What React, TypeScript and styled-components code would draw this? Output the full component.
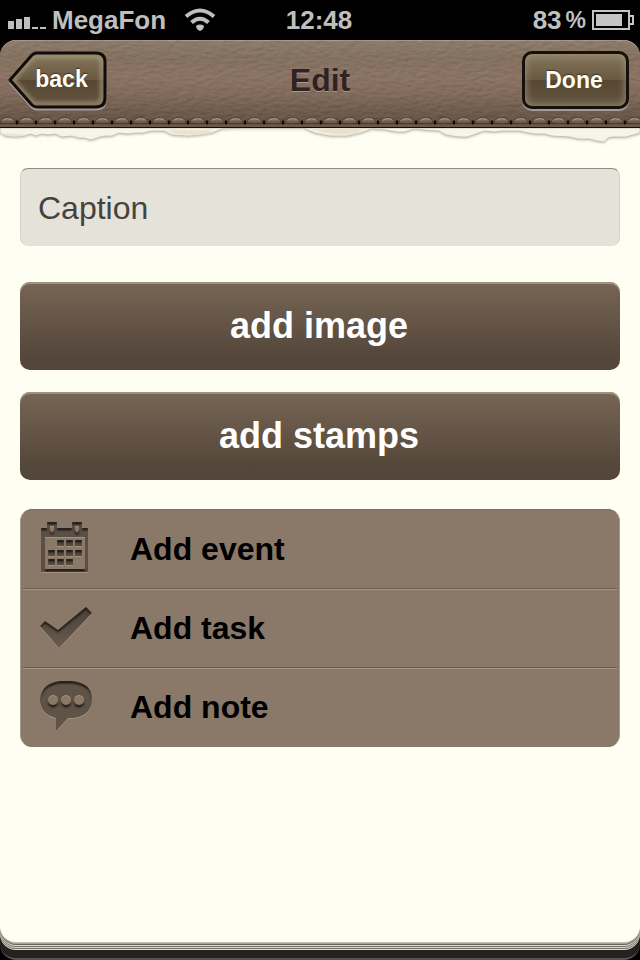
import React from "react";
import styled, { createGlobalStyle } from "styled-components";

const Global = createGlobalStyle`
  * { box-sizing: border-box; }
  html, body { margin: 0; background: #000; }
  body { font-family: "Liberation Sans", Arial, Helvetica, sans-serif; }
  button, input { font-family: inherit; }
`;

const Screen = styled.div`
  display: flex;
  flex-direction: column;
  min-height: 100vh;
  background: #000;
`;

const StatusBar = styled.header`
  display: grid;
  grid-template-columns: 1fr auto 1fr;
  align-items: center;
  height: 40px;
  padding: 0 6px 0 8px;
  color: #bfbfbf;
  font-size: 26px;
  font-weight: bold;
  line-height: 40px;
`;

const StatusGroup = styled.div<{ $end?: boolean }>`
  display: flex;
  align-items: center;
  justify-content: ${(p) => (p.$end ? "flex-end" : "flex-start")};
  gap: ${(p) => (p.$end ? 6 : 5)}px;
`;

const Carrier = styled.span`
  margin-right: 13px;
`;

const Clock = styled.span`
  padding-right: 4px;
`;

const Percent = styled.span`
  display: flex;
  gap: 4px;
`;

const PercentSign = styled.span`
  font-size: 23px;
`;

const NavBar = styled.nav`
  position: relative;
  z-index: 1;
  display: grid;
  grid-template-columns: 1fr auto 1fr;
  align-items: start;
  height: 88px;
  padding: 11px 11px 0 8px;
  border-radius: 16px 16px 0 0;
  background: linear-gradient(#8f7e6d 0, #85725f 18px, #8d7464 38px, #7f6959 56px, #695647 74px, #5c4b3e 88px);
  box-shadow: inset 0 1px #ada092;
`;

const LeatherGrain = styled.svg`
  position: absolute;
  inset: 0;
  width: 100%;
  height: 100%;
  border-radius: 16px 16px 0 0;
`;

const Seam = styled.svg`
  position: absolute;
  left: 0;
  bottom: 0;
  width: 100%;
  height: 14px;
`;

const Title = styled.h1`
  position: relative;
  margin: 0;
  padding-left: 3px;
  color: #32221f;
  font-size: 32px;
  line-height: 58px;
  text-shadow: 0 1px #a69a92;
`;

const BackButton = styled.button`
  position: relative;
  justify-self: start;
  width: 100px;
  height: 60px;
  padding: 0 0 4px 7px;
  border: 0;
  background: none;
  color: #fffef2;
  font-size: 23px;
  font-weight: bold;
  text-shadow: 0 -1px 1px #3c3226;
`;

const BackShape = styled.svg`
  position: absolute;
  left: 0;
  top: 0;
`;

const BackLabel = styled.span`
  position: relative;
`;

const DoneButton = styled.button`
  position: relative;
  justify-self: end;
  width: 107px;
  height: 58px;
  padding: 0 3px 0 0;
  border: 3px solid #17110d;
  border-radius: 10px;
  background: linear-gradient(#87775f 0, #67583f 50%, #574733 51%, #63543f 100%);
  box-shadow: inset 0 0 8px #a19679, 0 2px #a59a95;
  color: #fffef2;
  font-size: 23px;
  font-weight: bold;
  text-shadow: 0 -1px 1px #3c3226;
`;

const Base = styled.div`
  display: flex;
  flex: 1;
  flex-direction: column;
  padding-bottom: 16px;
  border-bottom: 2px solid #555352;
  border-radius: 0 0 16px 16px;
  background: #25211f;
`;

const Paper = styled.main`
  position: relative;
  flex: 1;
  padding: 40px 20px;
  border-radius: 0 0 16px 16px;
  background: #fffef2;
  box-shadow: 0 1px #c5c2b6, 0 2px #a5a297, 0 3px #66645c, 0 4px #dedbd0,
    0 5px #77746b, 0 6px #d5d2c7, 0 7px #77746b, 0 8px #dedbd0;
`;

const TornEdge = styled.svg`
  position: absolute;
  left: 0;
  top: 0;
  width: 100%;
  height: 18px;
`;

const Form = styled.form`
  display: flex;
  flex-direction: column;
`;

const CaptionInput = styled.input`
  width: 100%;
  height: 78px;
  margin-bottom: 36px;
  padding: 2px 17px 0;
  border: 1px solid #d5d2c7;
  border-top-color: #8f8c82;
  border-bottom-color: #e5e2d9;
  border-radius: 8px;
  background: #e5e2d9;
  color: #44443f;
  font-size: 32px;
  &::placeholder { color: #44443f; opacity: 1; }
`;

const WideButton = styled.button`
  height: 88px;
  margin-bottom: 22px;
  padding: 0 2px 0 0;
  border: 0;
  border-radius: 10px;
  background: linear-gradient(#776655, #54463a 85%);
  box-shadow: inset 0 2px #9e9282;
  color: #fff;
  font-size: 36px;
  font-weight: bold;
`;

const ActionList = styled.ul`
  margin: 7px 0 0;
  padding: 0 2px;
  list-style: none;
  border: 1px solid #a3998b;
  border-top-color: #786c5d;
  border-bottom-color: #84786b;
  border-radius: 12px;
  background: #8a7968;
`;

const ActionItem = styled.li`
  & + & { border-top: 1px solid #69594b; box-shadow: inset 0 1px #a79886; }
`;

const ActionButton = styled.button`
  display: grid;
  grid-template-columns: 54px 1fr;
  column-gap: 36px;
  align-items: center;
  width: 100%;
  height: 78px;
  padding: 0 17px;
  border: 0;
  background: none;
  color: #000;
  font-size: 32px;
  font-weight: bold;
  text-align: left;
`;

const SignalIcon = () => (
  <svg width="39" height="24" viewBox="0 0 39 24" fill="currentColor" aria-hidden="true">
    <path d="M0 13h6v8H0zM8 11h6v10H8zM16 9h6v12h-6zM24 19h6v2h-6zM32 19h6v2h-6z" />
  </svg>
);

const WifiIcon = () => (
  <svg width="32" height="24" viewBox="0 0 32 24" fill="none" stroke="currentColor" strokeWidth="4" aria-hidden="true">
    <path d="M2 8.5Q16-3.5 30 8.5M7.500 14.500Q16 7 24.500 14.500" />
    <path d="M12 19Q12 16.500 16 16.500T20 19Q19 22 16 23Q13 22 12 19z" fill="currentColor" stroke="none" />
  </svg>
);

const BatteryIcon = () => (
  <svg width="42" height="20" viewBox="0 0 42 20" aria-hidden="true">
    <path d="M1 1h36v18H1z" fill="none" stroke="#c4c4c4" strokeWidth="2" />
    <path d="M4 4h26v12H4z" fill="#c4c4c4" />
    <path d="M37 6h4v8h-4" fill="none" stroke="#c4c4c4" strokeWidth="2" />
  </svg>
);

const BackOutline = () => (
  <BackShape width="100" height="60" viewBox="0 0 100 60" aria-hidden="true">
    <defs>
      <linearGradient id="backFill" x2="0" y2="1">
        <stop stopColor="#87775f" />
        <stop offset=".5" stopColor="#67583f" />
        <stop offset=".51" stopColor="#574733" />
        <stop offset="1" stopColor="#63543f" />
      </linearGradient>
      <clipPath id="backClip"><path d="M2 29L24 4Q26 2 29 2h59q9 0 9 9v36q0 9-9 9H29q-3 0-5-2z" /></clipPath>
      <filter id="backGlow"><feGaussianBlur stdDeviation="2" /></filter>
    </defs>
    <path d="M2 31L24 56Q26 58 29 58h59q9 0 9-9v-9" fill="none" stroke="#a59a95" strokeWidth="3" />
    <g clipPath="url(#backClip)">
      <path d="M2 29L24 4Q26 2 29 2h59q9 0 9 9v36q0 9-9 9H29q-3 0-5-2z" fill="url(#backFill)" />
      <path d="M5 29L26 5h61q7 0 7 7v34q0 7-7 7H26z" fill="none" stroke="#aaa081" strokeWidth="3" filter="url(#backGlow)" />
    </g>
    <path d="M2 29L24 4Q26 2 29 2h59q9 0 9 9v36q0 9-9 9H29q-3 0-5-2z" fill="none" stroke="#120d0a" strokeWidth="3" strokeLinejoin="round" />
  </BackShape>
);

const Grain = () => (
  <LeatherGrain aria-hidden="true">
    <filter id="leather" x="0" y="0" width="100%" height="100%" colorInterpolationFilters="sRGB">
      <feTurbulence type="fractalNoise" baseFrequency=".12 .3" numOctaves="3" seed="4" result="n" />
      <feDiffuseLighting in="n" surfaceScale="1.2" lightingColor="#b8a292"><feDistantLight azimuth="65" elevation="45" /></feDiffuseLighting>
    </filter>
    <rect width="100%" height="100%" filter="url(#leather)" opacity=".16" />
  </LeatherGrain>
);

const Stitches = () => (
  <Seam aria-hidden="true">
    <defs>
      <linearGradient id="thread" x2="0" y2="1">
        <stop stopColor="#988673" /><stop offset=".5" stopColor="#78675a" /><stop offset="1" stopColor="#5a4a3e" />
      </linearGradient>
      <pattern id="stitch" width="19" height="14" patternUnits="userSpaceOnUse" x="-2">
        <path d="M0 9h19" stroke="#45372c" strokeWidth="3" />
        <path d="M1.500 9Q3 3.500 9.500 3.500T17.500 9Q10 11 1.500 9z" fill="url(#thread)" stroke="#44362b" strokeWidth=".8" />
        <path d="M5 6Q9 3.500 14 5.500" fill="none" stroke="#a39280" />
        <path d="M0 6.500v5M19 6.500v5" stroke="#100a07" strokeWidth="2" />
        <path d="M0 11.500h19" stroke="#6d5c4e" strokeWidth="2" />
        <path d="M0 13.500h19" stroke="#17100b" />
      </pattern>
    </defs>
    <rect width="100%" height="14" fill="url(#stitch)" />
  </Seam>
);

const TornPaper = () => (
  <TornEdge viewBox="0 0 640 18" preserveAspectRatio="none" aria-hidden="true">
    <defs>
      <filter id="tearShadow" x="-5%" y="-30%" width="110%" height="190%"><feDropShadow dx="0" dy="1" stdDeviation="1" floodColor="#6d685b" floodOpacity=".4" /></filter>
      <filter id="soften" x="-5%" y="-30%" width="110%" height="160%"><feGaussianBlur stdDeviation="1" /></filter>
    </defs>
    <path d="M0 0V5L6 8 16 9 24 8 31 6 36 8 42 6 48 7 55 6 62 9 72 8 79 10 84 10 91 12 100 9 106 8 112 8 119 5 128 6 135 5 143 5 151 3 164 3 172 7 188 8 200 7 212 5 222 1 245 0H303L315 5 330 8 347 8 360 5 372 1 386 2 397 4 405 4 414 1 424 2 439 3 446 7 452 8 460 9 467 9 476 6 484 3 494 4 503 3 519 3 529 5 535 6 545 6 552 8 570 9 578 11 589 11 597 13 604 14 608 10 612 9 626 9 640 5V0z" fill="#f6f4e8" stroke="#b5b2a6" strokeWidth=".7" filter="url(#tearShadow)" />
    <path d="M165 1Q185 3 214 2L209 5 194 7 176 6zM308 0H366L357 5 342 7 324 5z" fill="#e9dfcc" filter="url(#soften)" />
    <path d="M0 5l16 1 14 1-15 2-15-2z" fill="#eadbcb" opacity=".7" />
  </TornEdge>
);

const InsetFilter = () => (
  <defs>
    <linearGradient id="ink" x2="0" y2="1"><stop stopColor="#4a4036" /><stop offset="1" stopColor="#695c4f" /></linearGradient>
    <filter id="emboss" x="-10%" y="-10%" width="120%" height="125%" colorInterpolationFilters="sRGB">
      <feOffset in="SourceAlpha" dy="2" result="down" />
      <feComposite in="SourceAlpha" in2="down" operator="out" result="edge" />
      <feGaussianBlur in="edge" stdDeviation="1" result="soft" />
      <feComposite in="soft" in2="SourceAlpha" operator="in" result="shade" />
      <feDropShadow in="SourceGraphic" dx="0" dy="1" stdDeviation="0" floodColor="#a19280" result="lit" />
      <feMerge><feMergeNode in="lit" /><feMergeNode in="shade" /></feMerge>
    </filter>
  </defs>
);

const CalendarIcon = () => (
  <svg width="54" height="54" viewBox="0 0 54 54" aria-hidden="true">
    <InsetFilter />
    <g filter="url(#emboss)">
      <path fillRule="evenodd" fill="#5c5045" d="M1 6h6V0h10v6h15V0h10v6h6v44H1zM5 15v32h40V15zM10 4v4l2 3 2-3V4zM35 4v4l2 3 2-3V4z" />
      <path fill="#574b40" d="M17 18h7v6h-7zM26 18h7v6h-7zM35 18h7v6h-7zM8 28h7v6H8zM17 28h7v6h-7zM26 28h7v6h-7zM35 28h7v6h-7zM8 37h7v6H8zM17 37h7v6h-7zM26 37h7v6h-7z" />
    </g>
  </svg>
);

const CheckIcon = () => (
  <svg width="54" height="54" viewBox="0 0 54 54" aria-hidden="true">
    <path filter="url(#emboss)" fill="url(#ink)" d="M0 25L5 20 18 29 46 6 52 12 19 47z" />
  </svg>
);

const NoteIcon = () => (
  <svg width="54" height="54" viewBox="0 0 54 54" aria-hidden="true">
    <path filter="url(#emboss)" fill="#5f5347" fillRule="evenodd" d="M20 1h12q20 2 20 18T34 38h-6L16 51V38Q0 34 0 19 2 3 20 1zM13 15a5 5 0 1 0 .1 0zM26 15a5 5 0 1 0 .1 0zM39 15a5 5 0 1 0 .1 0z" />
  </svg>
);

const actions = [
  { label: "Add event", Icon: CalendarIcon },
  { label: "Add task", Icon: CheckIcon },
  { label: "Add note", Icon: NoteIcon },
];

export default function App() {
  return (
    <Screen>
      <Global />
      <StatusBar>
        <StatusGroup><SignalIcon /><Carrier>MegaFon</Carrier><WifiIcon /></StatusGroup>
        <Clock>12:48</Clock>
        <StatusGroup $end><Percent>83<PercentSign>%</PercentSign></Percent><BatteryIcon /></StatusGroup>
      </StatusBar>
      <NavBar>
        <Grain />
        <Stitches />
        <BackButton type="button"><BackOutline /><BackLabel>back</BackLabel></BackButton>
        <Title>Edit</Title>
        <DoneButton type="submit" form="entry">Done</DoneButton>
      </NavBar>
      <Base>
        <Paper>
          <TornPaper />
          <Form id="entry" onSubmit={(e: React.FormEvent) => e.preventDefault()}>
            <CaptionInput type="text" aria-label="Caption" placeholder="Caption" />
            <WideButton type="button">add image</WideButton>
            <WideButton type="button">add stamps</WideButton>
          </Form>
          <ActionList>
            {actions.map(({ label, Icon }) => (
              <ActionItem key={label}><ActionButton type="button"><Icon /><span>{label}</span></ActionButton></ActionItem>
            ))}
          </ActionList>
        </Paper>
      </Base>
    </Screen>
  );
}
